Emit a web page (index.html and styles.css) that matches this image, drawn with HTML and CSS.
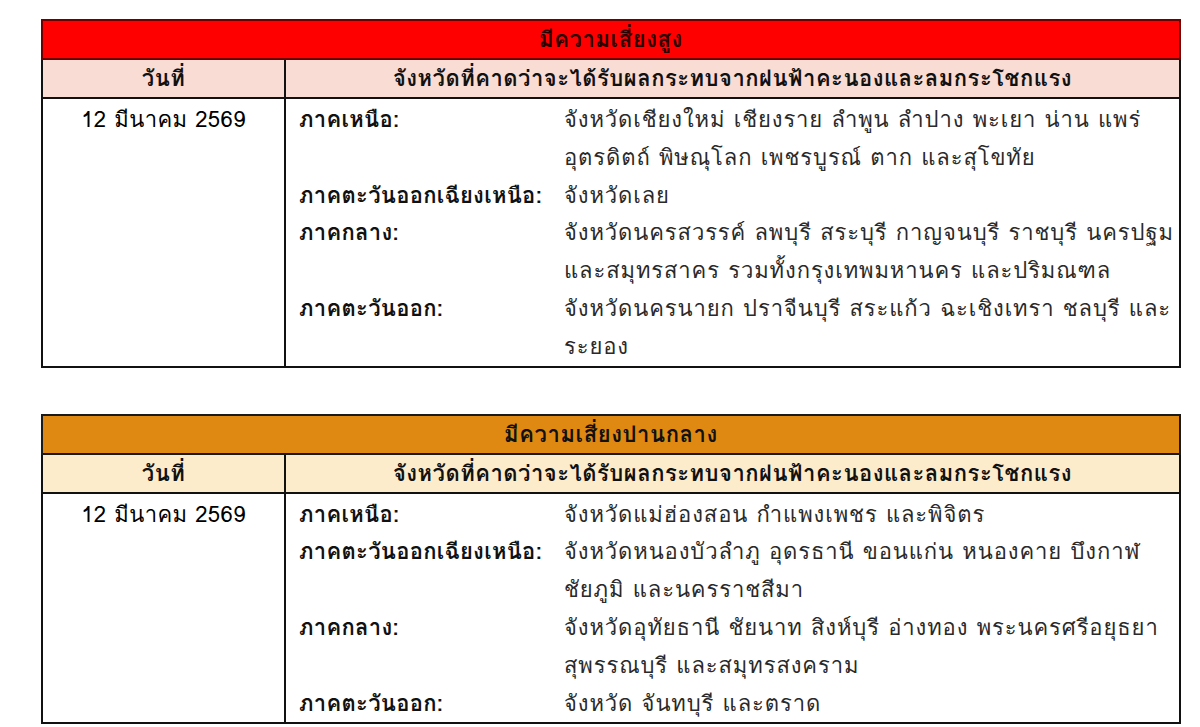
FILE: index.html
```html
<!DOCTYPE html>
<html lang="th">
<head>
<meta charset="utf-8">
<title>พื้นที่เสี่ยงภัย</title>
<link rel="stylesheet" href="styles.css">
</head>
<body>
<main class="page">
  <table class="risk risk-high">
    <colgroup><col class="col-date"><col class="col-area"></colgroup>
    <thead>
      <tr><th colspan="2" class="title">มีความเสี่ยงสูง</th></tr>
      <tr class="subhead"><th>วันที่</th><th>จังหวัดที่คาดว่าจะได้รับผลกระทบจากฝนฟ้าคะนองและลมกระโชกแรง</th></tr>
    </thead>
    <tbody>
      <tr>
        <td class="date">12 มีนาคม 2569</td>
        <td class="areas">
          <div class="regions">
            <div class="label">ภาคเหนือ:</div>
            <div class="value"><span class="line">จังหวัดเชียงใหม่ เชียงราย ลำพูน ลำปาง พะเยา น่าน แพร่</span><span class="line">อุตรดิตถ์ พิษณุโลก เพชรบูรณ์ ตาก และสุโขทัย</span></div>
            <div class="label">ภาคตะวันออกเฉียงเหนือ:</div>
            <div class="value"><span class="line">จังหวัดเลย</span></div>
            <div class="label">ภาคกลาง:</div>
            <div class="value"><span class="line">จังหวัดนครสวรรค์ ลพบุรี สระบุรี กาญจนบุรี ราชบุรี นครปฐม</span><span class="line">และสมุทรสาคร รวมทั้งกรุงเทพมหานคร และปริมณฑล</span></div>
            <div class="label">ภาคตะวันออก:</div>
            <div class="value"><span class="line">จังหวัดนครนายก ปราจีนบุรี สระแก้ว ฉะเชิงเทรา ชลบุรี และ</span><span class="line">ระยอง</span></div>
          </div>
        </td>
      </tr>
    </tbody>
  </table>

  <table class="risk risk-mid">
    <colgroup><col class="col-date"><col class="col-area"></colgroup>
    <thead>
      <tr><th colspan="2" class="title">มีความเสี่ยงปานกลาง</th></tr>
      <tr class="subhead"><th>วันที่</th><th>จังหวัดที่คาดว่าจะได้รับผลกระทบจากฝนฟ้าคะนองและลมกระโชกแรง</th></tr>
    </thead>
    <tbody>
      <tr>
        <td class="date">12 มีนาคม 2569</td>
        <td class="areas">
          <div class="regions">
            <div class="label">ภาคเหนือ:</div>
            <div class="value"><span class="line">จังหวัดแม่ฮ่องสอน กำแพงเพชร และพิจิตร</span></div>
            <div class="label">ภาคตะวันออกเฉียงเหนือ:</div>
            <div class="value"><span class="line">จังหวัดหนองบัวลำภู อุดรธานี ขอนแก่น หนองคาย บึงกาฬ</span><span class="line">ชัยภูมิ และนครราชสีมา</span></div>
            <div class="label">ภาคกลาง:</div>
            <div class="value"><span class="line">จังหวัดอุทัยธานี ชัยนาท สิงห์บุรี อ่างทอง พระนครศรีอยุธยา</span><span class="line">สุพรรณบุรี และสมุทรสงคราม</span></div>
            <div class="label">ภาคตะวันออก:</div>
            <div class="value"><span class="line">จังหวัด จันทบุรี และตราด</span></div>
          </div>
        </td>
      </tr>
    </tbody>
  </table>
</main>
</body>
</html>
```

FILE: styles.css
```css
html, body {
  margin: 0;
  padding: 0;
  background: #ffffff;
}

body {
  font-family: Tahoma, Loma, "DejaVu Sans", sans-serif;
  font-size: 22px;
  color: #111;
}

.page {
  padding: 19px 18px 0 41px;
  display: flex;
  flex-direction: column;
  gap: 46px;
}

.risk {
  width: 1140px;
  border-collapse: collapse;
  table-layout: fixed;
  border: 2px solid #111;
}

.col-date { width: 243px; }

.risk th,
.risk td {
  border: 2px solid #111;
  padding: 0;
}

.title {
  height: 37px;
  font-size: 22px;
  letter-spacing: 0.6px;
  font-weight: bold;
  text-align: center;
}

.risk-high .title {
  background: #ff0000;
  border: 2px solid #6e0000;
  color: #2a0000;
}

.risk-mid .title {
  background: #e08912;
  border: 2px solid #1a1a1a;
  color: #111;
}

.subhead th {
  height: 37px;
  font-size: 22px;
  letter-spacing: 0.5px;
  font-weight: bold;
  text-align: center;
}

.risk-high .subhead th { background: #f9dcd4; }
.risk-mid .subhead th { background: #fdeccb; }

.risk td.date {
  vertical-align: top;
  text-align: center;
  padding-top: 2px;
  line-height: 37.8px;
  letter-spacing: 0.4px;
  color: #000;
}

.areas {
  vertical-align: top;
}

.regions {
  display: grid;
  grid-template-columns: 265px 1fr;
  padding: 2px 0 0 13px;
  line-height: 37.8px;
}

.label {
  font-weight: bold;
  letter-spacing: 0.3px;
}

.value {
  color: #2a2a2a;
  letter-spacing: 0.9px;
}

.line {
  display: block;
  white-space: nowrap;
}
```
